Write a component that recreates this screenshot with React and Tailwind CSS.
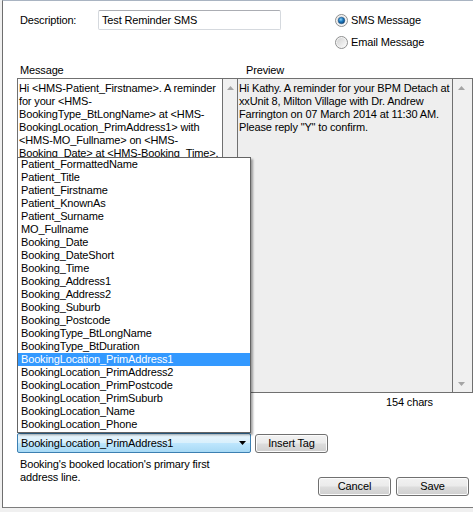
import React from "react";

const tags = [
  "Patient_FormattedName",
  "Patient_Title",
  "Patient_Firstname",
  "Patient_KnownAs",
  "Patient_Surname",
  "MO_Fullname",
  "Booking_Date",
  "Booking_DateShort",
  "Booking_Time",
  "Booking_Address1",
  "Booking_Address2",
  "Booking_Suburb",
  "Booking_Postcode",
  "BookingType_BtLongName",
  "BookingType_BtDuration",
  "BookingLocation_PrimAddress1",
  "BookingLocation_PrimAddress2",
  "BookingLocation_PrimPostcode",
  "BookingLocation_PrimSuburb",
  "BookingLocation_Name",
  "BookingLocation_Phone",
];

const messageLines = [
  "Hi <HMS-Patient_Firstname>. A reminder",
  "for your <HMS-",
  "BookingType_BtLongName> at <HMS-",
  "BookingLocation_PrimAddress1> with",
  "<HMS-MO_Fullname> on <HMS-",
  "Booking_Date> at <HMS-Booking_Time>.",
];

const previewLines = [
  "Hi Kathy. A reminder for your BPM Detach at",
  "xxUnit 8, Milton Village with Dr. Andrew",
  "Farrington on 07 March 2014 at 11:30 AM.",
  'Please reply "Y" to confirm.',
];

function Radio({ checked, id }) {
  return (
    <svg width="13" height="13" viewBox="0 0 13 13">
      <defs>
        <linearGradient id={`rb-${id}`} x1="0" y1="0" x2="1" y2="1">
          <stop offset="0" stopColor="#d2d2d2" />
          <stop offset="1" stopColor="#fafafa" />
        </linearGradient>
        <radialGradient id={`rd-${id}`} cx="0.4" cy="0.35" r="0.7">
          <stop offset="0" stopColor="#8fd0f5" />
          <stop offset="0.45" stopColor="#1f7ec4" />
          <stop offset="1" stopColor="#0b3c6e" />
        </radialGradient>
      </defs>
      <circle cx="6.5" cy="6.5" r="6" fill="#f4f4f4" stroke="#8e8f8f" />
      <circle cx="6.5" cy="6.5" r="4.5" fill={`url(#rb-${id})`} />
      {checked && <circle cx="6.5" cy="6.5" r="3.3" fill={`url(#rd-${id})`} stroke="#1c4f7f" strokeWidth="0.5" />}
    </svg>
  );
}

function Arrow({ down, color = "#a5a5a5" }) {
  return (
    <svg width="7" height="4" viewBox="0 0 7 4">
      {down ? <path d="M0 0h7L3.5 4z" fill={color} /> : <path d="M0 4h7L3.5 0z" fill={color} />}
    </svg>
  );
}

function WinButton({ children, className = "" }) {
  return (
    <button
      className={`h-[19px] w-[73px] rounded-[3px] border border-[#707070] bg-[linear-gradient(#f2f2f2_0%,#ebebeb_48%,#dddddd_52%,#cfcfcf_100%)] shadow-[inset_0_0_0_1px_#fcfcfc] text-[11px] leading-[13px] tracking-[-0.15px] text-black ${className}`}
    >
      {children}
    </button>
  );
}

export default function App() {
  return (
    <div className="relative w-[473px] h-[512px] overflow-hidden bg-[#f0f0f0] font-['Liberation_Sans',Arial,sans-serif] text-[11px] leading-[13px] tracking-[-0.15px] text-black">
      <div className="ml-[2px] h-[508px] bg-white border-l border-b border-t border-l-[#6e6e6e] border-b-[#7d7d7d] border-t-[#a9b4c2]">
        {/* description + message type */}
        <div className="flex h-[62px] pt-[9px]">
          <div className="ml-[17px] w-[78px] pt-[4px]">Description:</div>
          <div className="w-[183px] h-[20px] rounded-[2px] border border-[#d5d9de] border-t-[#abadb3] px-[3px] pt-[3px]">
            Test Reminder SMS
          </div>
          <div className="ml-[54px] flex flex-col gap-[9px] pt-[4px]">
            <label className="flex items-center gap-[3px]">
              <Radio checked id="sms" />
              <span>SMS Message</span>
            </label>
            <label className="flex items-center gap-[3px]">
              <Radio id="email" />
              <span>Email Message</span>
            </label>
          </div>
        </div>

        {/* labels */}
        <div className="flex h-[15px] pt-px">
          <div className="ml-[17px] w-[226px]">Message</div>
          <div>Preview</div>
        </div>

        {/* text boxes */}
        <div className="flex h-[315px] ml-[14px]">
          <div className="flex w-[226px] border-y border-l border-[#707070]">
            <div className="w-[205px] border-r border-[#707070] bg-white pl-px pt-[3px] whitespace-nowrap">
              {messageLines.map((l) => (
                <div key={l}>{l}</div>
              ))}
            </div>
            <div className="flex-1 bg-[#f0f0f0] flex justify-center pt-[7px]">
              <Arrow />
            </div>
          </div>
          <div className="flex w-[236px] shrink-0 border border-[#707070]">
            <div className="w-[215px] border-r border-[#707070] bg-[#eeeeee] pl-px pt-[3px] whitespace-nowrap">
              {previewLines.map((l) => (
                <div key={l}>{l}</div>
              ))}
            </div>
            <div className="flex-1 bg-[#f0f0f0] flex flex-col justify-between items-center pr-[2px] pt-[7px] pb-[6px]">
              <Arrow />
              <Arrow down />
            </div>
          </div>
        </div>

        <div className="mt-[3px] pl-[383px] h-[13px]">154 chars</div>

        {/* tag picker */}
        <div className="mt-[24px] flex items-start gap-[4px] ml-[14px]">
          <div className="flex h-[20px] w-[234px] items-center justify-between rounded-[2px] border border-[#3c7fb1] bg-[linear-gradient(#eaf6fd_0%,#d9f0fc_48%,#bee6fd_52%,#a7d9f5_100%)] pl-[3px] pr-[4px]">
            <span>BookingLocation_PrimAddress1</span>
            <Arrow down color="#000" />
          </div>
          <WinButton className="mt-px">Insert Tag</WinButton>
        </div>

        {/* tag description + actions */}
        <div className="mt-[5px] flex">
          <div className="ml-[17px]">
            Booking's booked location's primary first
            <br />
            address line.
          </div>
          <div className="ml-auto mr-[4px] mt-[19px] flex gap-[5px]">
            <WinButton>Cancel</WinButton>
            <WinButton>Save</WinButton>
          </div>
        </div>
      </div>

      {/* open dropdown list */}
      <div className="absolute left-[17px] top-[157px] w-[234px] h-[276px] border border-[#646464] bg-white shadow-[2px_2px_2px_rgba(0,0,0,0.35)]">
        {tags.map((t) => (
          <div
            key={t}
            className={`h-[13px] pl-[3px] whitespace-nowrap ${
              t === "BookingLocation_PrimAddress1" ? "bg-[#3399ff] text-white" : ""
            }`}
          >
            {t}
          </div>
        ))}
      </div>
    </div>
  );
}
